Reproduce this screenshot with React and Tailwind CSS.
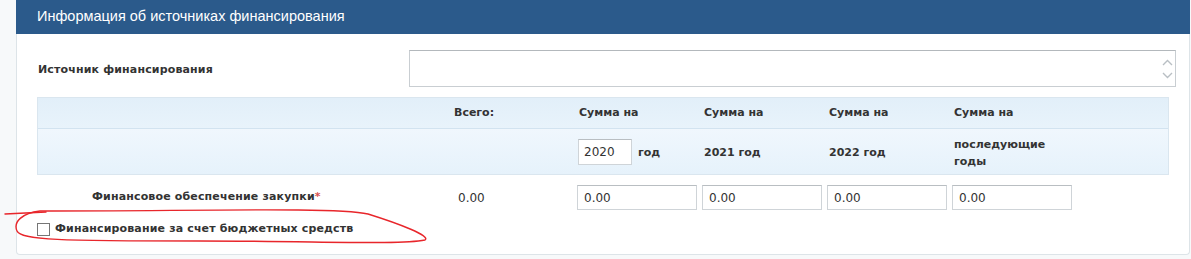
import React from 'react';

// ===== Year columns =====
const YEARS = [
  { top: 'Сумма на', bottom: 'input' },
  { top: 'Сумма на', bottom: '2021 год' },
  { top: 'Сумма на', bottom: '2022 год' },
  { top: 'Сумма на', bottom: 'последующие годы' },
];

const font = { fontFamily: '"DejaVu Sans", "Liberation Sans", sans-serif' };

function ScrollArrows() {
  return (
    <div className="flex flex-col items-center justify-center gap-[6px] w-[16px] text-[#b9bfc4]">
      <svg width="11" height="7" viewBox="0 0 11 7" fill="none" stroke="currentColor" strokeWidth="1.4">
        <path d="M1 6 L5.5 1.5 L10 6" />
      </svg>
      <svg width="11" height="7" viewBox="0 0 11 7" fill="none" stroke="currentColor" strokeWidth="1.4">
        <path d="M1 1 L5.5 5.5 L10 1" />
      </svg>
    </div>
  );
}

function Field({ value, className }) {
  return (
    <div className={`h-[25px] border border-[#cfd4d8] border-t-[#b9bec2] bg-white pl-[6px] flex items-center text-[12px] text-[#333] ${className}`}>
      {value}
    </div>
  );
}

export default function App() {
  return (
    <div className="w-[1191px] h-[259px] bg-[#f7f9fa] relative overflow-hidden text-[#333]" style={font}>
      <div className="ml-4 w-[1174px]">
        {/* Header */}
        <div className="h-[34px] bg-[#2b5a8b] flex items-center pl-[21px] text-[14.5px] text-white" style={{ fontFamily: '"Liberation Sans", sans-serif' }}>
          Информация об источниках финансирования
        </div>

        {/* Body */}
        <div className="bg-white border border-t-0 border-[#dde4e8] rounded-b-[4px] pl-[20px] pt-[16px] pb-[16px]">
          {/* Source */}
          <div className="flex items-center">
            <div className="w-[372px] pl-px pt-[4px] text-[11px] font-bold tracking-[0.15px]">Источник финансирования</div>
            <div className="w-[767px] h-[37px] border border-[#c9ced2] border-t-[#b3b8bc] bg-white flex justify-end">
              <ScrollArrows />
            </div>
          </div>

          {/* Table head */}
          <div className="mt-[10px] w-[1132px] border border-[#dae6ef] text-[11px] font-bold">
            <div className="h-[31px] grid grid-cols-[373px_162px_125px_125px_125px_125px_1fr] items-center bg-gradient-to-b from-[#e2eff9] to-[#e8f3fb] border-b border-[#d2e3f0]">
              <div />
              <div className="pl-[43px]">Всего:</div>
              {YEARS.map((y, i) => (
                <div key={i} className="pl-[6px]">{y.top}</div>
              ))}
              <div />
            </div>
            <div className="h-[45px] grid grid-cols-[373px_162px_125px_125px_125px_125px_1fr] items-center bg-gradient-to-b from-[#f0f7fd] to-[#e6f2fb]">
              <div />
              <div />
              {YEARS.map((y, i) =>
                y.bottom === 'input' ? (
                  <div key={i} className="flex items-center pl-[5px]">
                    <div className="w-[54px] h-[26px] border border-[#cfd4d8] border-t-[#b9bec2] bg-white flex items-center pl-[5px] font-normal text-[12px]">2020</div>
                    <span className="ml-[6px] mt-[3px]">год</span>
                  </div>
                ) : (
                  <div key={i} className="pl-[6px] pt-[2px] leading-[17px] pr-[20px]">{y.bottom}</div>
                )
              )}
              <div />
            </div>
          </div>

          {/* Data row */}
          <div className="w-[1132px] pt-[10px] grid grid-cols-[373px_162px_125px_125px_125px_125px_1fr] items-center">
            <div className="pl-[55px] text-[11px] font-bold tracking-[0.15px]">
              Финансовое обеспечение закупки<span className="text-[#d9534f]">*</span>
            </div>
            <div className="pl-[48px] text-[12px]">0.00</div>
            {[0, 1, 2, 3].map((i) => (
              <div key={i} className="pl-[5px]">
                <Field value="0.00" className="w-[120px]" />
              </div>
            ))}
            <div />
          </div>

          {/* Checkbox */}
          <label className="mt-[11px] flex items-center gap-[5px] text-[11px] font-bold tracking-[0.15px]">
            <span className="w-[13px] h-[13px] border border-[#767676] bg-white" />
            Финансирование за счет бюджетных средств
          </label>
        </div>
      </div>

      {/* Red annotation */}
      <svg className="absolute left-0 top-0 pointer-events-none" width="1191" height="259" fill="none" stroke="#e8262b" strokeWidth="1.4" strokeLinecap="round">
        <path d="M5 214 L46 212" />
        <path d="M40 211 C22 213 13 222 17 231 C21 240 60 241 200 241 C320 241 400 245 425 240 C431 236 400 224 368 214 C336 207 200 211 40 211" />
      </svg>
    </div>
  );
}
